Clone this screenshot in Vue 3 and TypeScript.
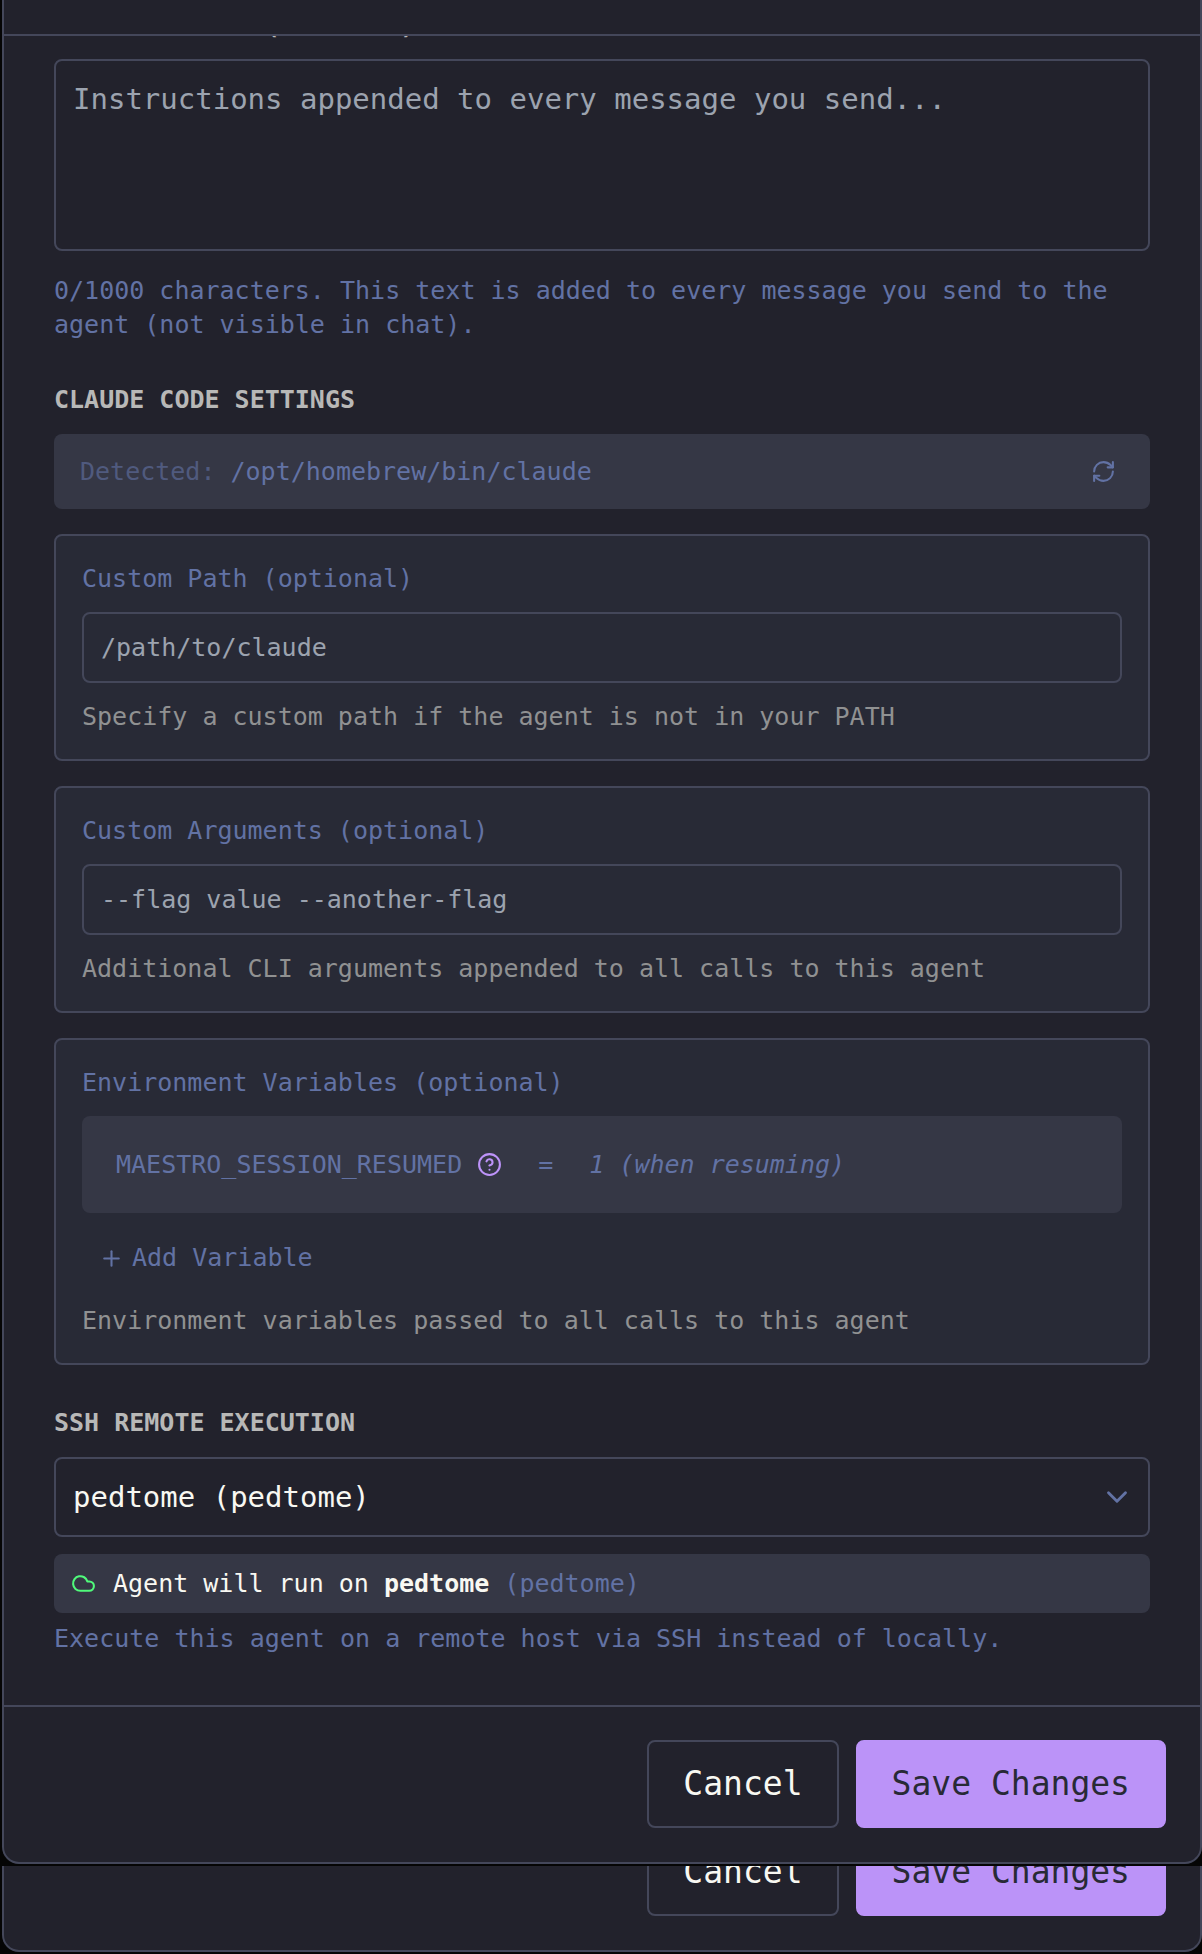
<script setup lang="ts">
import { ref } from 'vue'

interface PathField {
  id: string
  label: string
  placeholder: string
  help: string
}

const fields: PathField[] = [
  {
    id: 'custom-path',
    label: 'Custom Path (optional)',
    placeholder: '/path/to/claude',
    help: 'Specify a custom path if the agent is not in your PATH',
  },
  {
    id: 'custom-args',
    label: 'Custom Arguments (optional)',
    placeholder: '--flag value --another-flag',
    help: 'Additional CLI arguments appended to all calls to this agent',
  },
]

const maxLength = 1000
const nudge = ref('')
const values = ref<Record<string, string>>({ 'custom-path': '', 'custom-args': '' })
const remote = ref('pedtome')
</script>

<template>
  <div class="page">
    <section class="dialog">
      <header class="dialog-header"></header>

      <div class="dialog-body">
        <label class="heading scrolled" for="nudge">NUDGE MESSAGE (OPTIONAL)</label>
        <textarea
          id="nudge"
          v-model="nudge"
          class="control nudge"
          :maxlength="maxLength"
          placeholder="Instructions appended to every message you send..."
        ></textarea>
        <p class="hint nudge-hint">
          {{ nudge.length }}/{{ maxLength }} characters. This text is added to every message you send to the agent (not visible in chat).
        </p>

        <h3 class="heading section">CLAUDE CODE SETTINGS</h3>
        <div class="detected">
          <span><span class="faint">Detected:</span> /opt/homebrew/bin/claude</span>
          <button class="icon-button" type="button" aria-label="Refresh">
            <svg class="icon" viewBox="0 0 24 24">
              <path d="M3 12a9 9 0 0 1 9-9 9.75 9.75 0 0 1 6.74 2.74L21 8" />
              <path d="M21 3v5h-5" />
              <path d="M21 12a9 9 0 0 1-9 9 9.75 9.75 0 0 1-6.74-2.74L3 16" />
              <path d="M8 16H3v5" />
            </svg>
          </button>
        </div>

        <div v-for="f in fields" :key="f.id" class="card">
          <label class="card-label" :for="f.id">{{ f.label }}</label>
          <input :id="f.id" v-model="values[f.id]" class="control field" type="text" :placeholder="f.placeholder" />
          <p class="card-help">{{ f.help }}</p>
        </div>

        <div class="card">
          <h4 class="card-label">Environment Variables (optional)</h4>
          <div class="env-row">
            <span>MAESTRO_SESSION_RESUMED</span>
            <svg class="icon env-help" viewBox="0 0 24 24">
              <circle cx="12" cy="12" r="10" />
              <path d="M9.09 9a3 3 0 0 1 5.83 1c0 2-3 3-3 3" />
              <path d="M12 17h.01" />
            </svg>
            <span class="env-equals">=</span>
            <em>1 (when resuming)</em>
          </div>
          <button class="add-button" type="button">
            <svg class="icon" viewBox="0 0 24 24">
              <path d="M5 12h14" />
              <path d="M12 5v14" />
            </svg>
            Add Variable
          </button>
          <p class="card-help">Environment variables passed to all calls to this agent</p>
        </div>

        <label class="heading section" for="remote">SSH REMOTE EXECUTION</label>
        <div class="select-wrap">
          <select id="remote" v-model="remote" class="control select">
            <option value="pedtome">pedtome (pedtome)</option>
          </select>
          <svg class="icon chevron" viewBox="0 0 24 24"><path d="m6 9 6 6 6-6" /></svg>
        </div>
        <div class="status">
          <svg class="icon cloud" viewBox="0 0 24 24">
            <path d="M17.5 19H9a7 7 0 1 1 6.71-9h1.79a4.5 4.5 0 1 1 0 9Z" />
          </svg>
          <span>Agent will run on <strong>pedtome</strong> <span class="dim">(pedtome)</span></span>
        </div>
        <p class="hint remote-hint">Execute this agent on a remote host via SSH instead of locally.</p>
      </div>

      <footer class="dialog-footer">
        <button class="button" type="button">Cancel</button>
        <button class="button primary" type="button">Save Changes</button>
      </footer>
    </section>

    <section class="dialog sliver">
      <footer class="dialog-footer">
        <button class="button" type="button">Cancel</button>
        <button class="button primary" type="button">Save Changes</button>
      </footer>
    </section>
  </div>
</template>

<style>
body {
  margin: 0;
  background: #050505;
}
</style>

<style scoped>
* {
  box-sizing: border-box;
}

.page {
  display: flex;
  flex-direction: column;
  gap: 2px;
  padding: 0 0 2px 2px;
  font-family: "DejaVu Sans Mono", monospace;
  font-size: 25px;
  line-height: 34px;
  color: #f8f8f2;
}

p,
h3,
h4 {
  margin: 0;
}

button,
input,
select,
textarea {
  font: inherit;
  color: inherit;
  margin: 0;
}

button {
  cursor: pointer;
}

.dialog {
  display: flex;
  flex-direction: column;
  background: #22222c;
  border: 2px solid #44475a;
  border-top: 0;
  border-radius: 0 0 17px 17px;
  overflow: hidden;
}

/* The lower dialog shows only the end of its footer. */
.sliver {
  height: 86px;
  justify-content: flex-end;
}

.dialog-header {
  height: 36px;
  border-bottom: 2px solid #44475a;
}

.dialog-body {
  display: flex;
  flex-direction: column;
  padding: 0 50px 49px;
  overflow: hidden;
}

.heading {
  font-size: 25px;
  font-weight: 700;
  color: #b8b8b7;
}

.scrolled {
  margin: -27px 0 16px;
}

.section {
  margin: 41px 0 17px;
}

.control {
  display: block;
  width: 100%;
  border: 2px solid #44475a;
  border-radius: 8px;
  background: transparent;
  outline: none;
}

.control::placeholder {
  color: #9ca3af;
  opacity: 1;
}

.nudge {
  height: 192px;
  padding: 17px;
  resize: none;
  font-size: 29px;
  line-height: 42px;
}

.hint {
  color: #6272a4;
}

.nudge-hint {
  margin-top: 23px;
}

.detected {
  display: flex;
  align-items: center;
  justify-content: space-between;
  height: 75px;
  padding: 0 26px;
  border-radius: 8px;
  background: #353745;
  color: #6272a4;
}

.faint {
  opacity: 0.6;
}

.icon {
  display: block;
  flex: none;
  width: 25px;
  height: 25px;
  fill: none;
  stroke: currentColor;
  stroke-width: 2;
  stroke-linecap: round;
  stroke-linejoin: round;
}

.icon-button {
  padding: 8px;
  border: 0;
  background: none;
}

.card {
  display: flex;
  flex-direction: column;
  margin-top: 25px;
  padding: 26px 26px 25px;
  border: 2px solid #44475a;
  border-radius: 8px;
  background: #282a36;
}

.card-label {
  margin-bottom: 16px;
  font-weight: 400;
  color: #6272a4;
}

.field {
  height: 71px;
  padding: 0 17px;
}

.card-help {
  margin-top: 17px;
  color: #909192;
}

.env-row {
  display: flex;
  align-items: center;
  height: 97px;
  padding: 0 34px;
  border-radius: 8px;
  background: #353745;
  color: #6272a4;
}

.env-help {
  margin-left: 15px;
  color: #bd93f9;
}

.env-equals {
  margin: 0 36px;
}

.add-button {
  display: flex;
  align-items: center;
  gap: 8px;
  align-self: flex-start;
  margin-top: 16px;
  padding: 12px 17px;
  border: 0;
  background: none;
  color: #6272a4;
}

.select-wrap {
  position: relative;
}

.select {
  height: 80px;
  padding: 0 17px;
  appearance: none;
  font-size: 29px;
}

.chevron {
  position: absolute;
  top: 23px;
  right: 16px;
  width: 34px;
  height: 34px;
  color: #6272a4;
  pointer-events: none;
}

.status {
  display: flex;
  align-items: center;
  gap: 17px;
  height: 59px;
  margin-top: 17px;
  padding: 0 17px;
  border-radius: 8px;
  background: #353745;
}

.cloud {
  color: #50fa7b;
}

.dim {
  color: #6272a4;
}

.remote-hint {
  margin-top: 9px;
}

.dialog-footer {
  display: flex;
  justify-content: flex-end;
  gap: 17px;
  padding: 33px 34px 34px;
  border-top: 2px solid #44475a;
}

.button {
  flex: none;
  height: 88px;
  padding: 0 34px;
  border: 2px solid #44475a;
  border-radius: 8px;
  background: transparent;
  font-size: 33px;
}

.primary {
  border-color: #bb93f8;
  background: #bb93f8;
  color: #282a36;
}
</style>
